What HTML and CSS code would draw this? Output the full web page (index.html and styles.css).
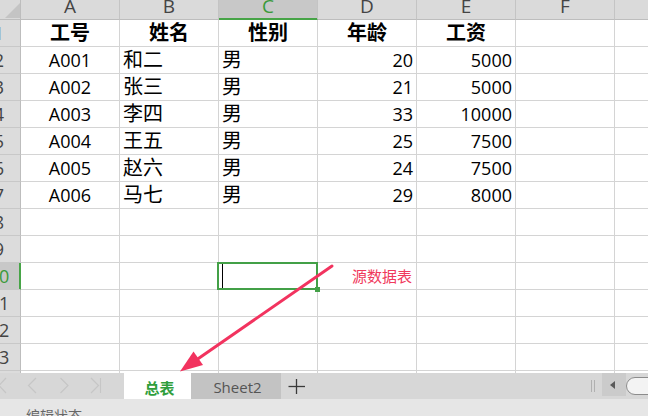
FILE: index.html
```html
<!DOCTYPE html>
<html lang="zh-CN">
<head>
<meta charset="utf-8">
<title>总表</title>
<link rel="stylesheet" href="styles.css">
</head>
<body>
<div class="viewport">
  <div class="sheet">
    <div class="cell corner"><svg class="corner-tri" width="15" height="15" viewBox="0 0 15 15"><polygon points="15,0 15,15 0,15" fill="#c4c4c4"/></svg></div>
    <div class="cell ch">A</div><div class="cell ch">B</div><div class="cell ch sel">C</div><div class="cell ch">D</div><div class="cell ch">E</div><div class="cell ch">F</div><div class="cell ch"></div>

    <div class="cell rh">1</div>
    <div class="cell mid b">工号</div><div class="cell mid b">姓名</div><div class="cell mid b">性别</div><div class="cell mid b">年龄</div><div class="cell mid b">工资</div><div class="cell"></div><div class="cell"></div>

    <div class="cell rh">2</div>
    <div class="cell mid">A001</div><div class="cell left cjk">和二</div><div class="cell left cjk">男</div><div class="cell right">20</div><div class="cell right">5000</div><div class="cell"></div><div class="cell"></div>

    <div class="cell rh">3</div>
    <div class="cell mid">A002</div><div class="cell left cjk">张三</div><div class="cell left cjk">男</div><div class="cell right">21</div><div class="cell right">5000</div><div class="cell"></div><div class="cell"></div>

    <div class="cell rh">4</div>
    <div class="cell mid">A003</div><div class="cell left cjk">李四</div><div class="cell left cjk">男</div><div class="cell right">33</div><div class="cell right">10000</div><div class="cell"></div><div class="cell"></div>

    <div class="cell rh">5</div>
    <div class="cell mid">A004</div><div class="cell left cjk">王五</div><div class="cell left cjk">男</div><div class="cell right">25</div><div class="cell right">7500</div><div class="cell"></div><div class="cell"></div>

    <div class="cell rh">6</div>
    <div class="cell mid">A005</div><div class="cell left cjk">赵六</div><div class="cell left cjk">男</div><div class="cell right">24</div><div class="cell right">7500</div><div class="cell"></div><div class="cell"></div>

    <div class="cell rh">7</div>
    <div class="cell mid">A006</div><div class="cell left cjk">马七</div><div class="cell left cjk">男</div><div class="cell right">29</div><div class="cell right">8000</div><div class="cell"></div><div class="cell"></div>

    <div class="cell rh">8</div>
    <div class="cell"></div><div class="cell"></div><div class="cell"></div><div class="cell"></div><div class="cell"></div><div class="cell"></div><div class="cell"></div>

    <div class="cell rh">9</div>
    <div class="cell"></div><div class="cell"></div><div class="cell"></div><div class="cell"></div><div class="cell"></div><div class="cell"></div><div class="cell"></div>

    <div class="cell rh sel">10</div>
    <div class="cell"></div><div class="cell"></div>
    <div class="cell active"><div class="sel-box"><span class="caret"></span><span class="handle"></span></div></div>
    <div class="cell"></div><div class="cell"></div><div class="cell"></div><div class="cell"></div>

    <div class="cell rh">11</div>
    <div class="cell"></div><div class="cell"></div><div class="cell"></div><div class="cell"></div><div class="cell"></div><div class="cell"></div><div class="cell"></div>

    <div class="cell rh">12</div>
    <div class="cell"></div><div class="cell"></div><div class="cell"></div><div class="cell"></div><div class="cell"></div><div class="cell"></div><div class="cell"></div>

    <div class="cell rh">13</div>
    <div class="cell"></div><div class="cell"></div><div class="cell"></div><div class="cell"></div><div class="cell"></div><div class="cell"></div><div class="cell"></div>

    <div class="cell rh">14</div>
    <div class="cell"></div><div class="cell"></div><div class="cell"></div><div class="cell"></div><div class="cell"></div><div class="cell"></div><div class="cell"></div>
  </div>
</div>

<div class="tabbar">
  <div class="tabnav">
    <svg width="124" height="26" viewBox="0 0 124 26">
      <g fill="none" stroke="#c6c6c6" stroke-width="1.2">
        <polyline points="6,5 -1,12.5 6,20"/>
        <polyline points="36,5 28.5,12.5 36,20"/>
        <polyline points="60.5,5 68,12.5 60.5,20"/>
        <polyline points="91,5 98.5,12.5 91,20"/>
        <line x1="100.5" y1="5" x2="100.5" y2="20"/>
      </g>
    </svg>
  </div>
  <div class="tab tab-active">总表</div>
  <div class="tab tab-other">Sheet2</div>
  <div class="tab-add">
    <svg width="18" height="16" viewBox="0 0 18 16"><g stroke="#3a3a3a" stroke-width="1.3"><line x1="0.5" y1="7.5" x2="17" y2="7.5"/><line x1="8.5" y1="0" x2="8.5" y2="15"/></g></svg>
  </div>
  <div class="spacer"></div>
  <div class="grip"></div>
  <div class="scroll-btn"><svg width="6" height="8" viewBox="0 0 6 8"><polygon points="5,0 5,8 0,4" fill="#5a5a5a"/></svg></div>
  <div class="thumb"></div>
</div>

<div class="statusbar">编辑状态</div>

<svg class="annot" width="648" height="416" viewBox="0 0 648 416">
  <line x1="332" y1="266" x2="197" y2="359.5" stroke="#f2335f" stroke-width="3" stroke-linecap="round"/>
  <polygon points="180,371.5 203,365 193.5,351.5" fill="#f2335f"/>
  <text x="352" y="282" class="annot-text">源数据表</text>
</svg>
</body>
</html>
```
FILE: styles.css
```css
html, body {
  margin: 0;
  padding: 0;
  width: 648px;
  height: 416px;
  overflow: hidden;
  background: #ffffff;
}
body {
  position: relative;
  font-family: "Open Sans", "Noto Sans CJK SC", sans-serif;
  color: #000;
}
.viewport {
  height: 373px;
  overflow: hidden;
}
.sheet {
  display: grid;
  grid-template-columns: 43px repeat(7, 99px);
  grid-template-rows: 20px repeat(14, 27px);
  margin-left: -22px;
}
.cell {
  box-sizing: border-box;
  border-right: 1px solid #d4d4d4;
  border-bottom: 1px solid #d4d4d4;
  display: flex;
  align-items: center;
  font-size: 18px;
  line-height: 26px;
  white-space: nowrap;
  overflow: hidden;
}
.corner {
  background: #dadada;
  border-right-color: #bdbdbd;
  border-bottom-color: #bdbdbd;
  justify-content: flex-end;
  align-items: flex-end;
}
.corner-tri {
  display: block;
  margin-bottom: 1px;
}
.ch {
  background: #dadada;
  color: #444;
  font-size: 19px;
  line-height: 13px;
  align-items: flex-start;
  justify-content: center;
  border-right-color: #c4c4c4;
  border-bottom-color: #bdbdbd;
}
.ch.sel {
  background: #c8c8c8;
  color: #3a9a3a;
  border-bottom-color: #47a447;
  box-shadow: inset 0 -1px 0 #47a447;
}
.rh {
  background: #dcdcdc;
  color: #444;
  justify-content: center;
  border-right-color: #bdbdbd;
  border-bottom-color: #c8c8c8;
}
.rh.sel {
  background: #c8c8c8;
  color: #3a9a3a;
  border-right-color: #47a447;
  box-shadow: inset -1px 0 0 #47a447;
}
.mid { justify-content: center; }
.left { padding-left: 3px; }
.right { justify-content: flex-end; padding-right: 3px; }
.cjk { font-size: 20px; }
.b { font-weight: 700; font-size: 20px; }
.active {
  position: relative;
  overflow: visible;
}
.sel-box {
  position: absolute;
  left: -2px;
  top: -1px;
  width: 101px;
  height: 28px;
  box-sizing: border-box;
  border: 2px solid #43a047;
  z-index: 2;
}
.caret {
  position: absolute;
  left: 3px;
  top: 0;
  width: 1px;
  height: 24px;
  background: #000;
}
.handle {
  position: absolute;
  right: -4px;
  bottom: -4px;
  width: 5px;
  height: 5px;
  background: #43a047;
}
.tabbar {
  display: flex;
  height: 26px;
  background: #d7d7d7;
}
.tabnav {
  width: 124px;
  flex: none;
}
.tabnav svg { display: block; }
.tab {
  flex: none;
  display: flex;
  align-items: center;
  justify-content: center;
  padding-top: 2px;
  box-sizing: border-box;
  font-size: 15px;
}
.tab-active {
  width: 67px;
  background: #ffffff;
  color: #2f9e3c;
  font-weight: 700;
  padding-left: 4px;
}
.tab-other {
  width: 90px;
  background: #c3c3c3;
  color: #555;
  padding-left: 3px;
}
.tab-add {
  flex: none;
  width: 32px;
  display: flex;
  align-items: center;
  padding-left: 7px;
  box-sizing: border-box;
}
.tab-add svg { display: block; margin-top: 1px; }
.spacer { flex: 1; }
.grip {
  flex: none;
  width: 4px;
  height: 12px;
  margin-top: 7px;
  box-sizing: border-box;
  border-left: 1px solid #b0b0b0;
  border-right: 1px solid #b0b0b0;
  margin-right: 7px;
}
.scroll-btn {
  flex: none;
  width: 24px;
  height: 23px;
  background: #cbcbcb;
  display: flex;
  align-items: center;
  justify-content: center;
  padding-right: 2px;
  box-sizing: border-box;
}
.scroll-btn svg { display: block; }
.thumb {
  flex: none;
  width: 40px;
  height: 18px;
  margin-top: 4px;
  margin-right: -18px;
  box-sizing: border-box;
  border: 1px solid #8c8c8c;
  border-radius: 9px;
  background: #f3f3f3;
}
.statusbar {
  height: 17px;
  box-sizing: border-box;
  background: #e6e6e6;
  padding-left: 26px;
  padding-top: 7px;
  font-size: 14px;
  line-height: 20px;
  color: #666;
  overflow: hidden;
}
.annot {
  position: absolute;
  left: 0;
  top: 0;
  pointer-events: none;
  z-index: 5;
}
.annot-text {
  font-family: "Noto Sans CJK SC", sans-serif;
  font-size: 15px;
  fill: #f03a5c;
}
```
